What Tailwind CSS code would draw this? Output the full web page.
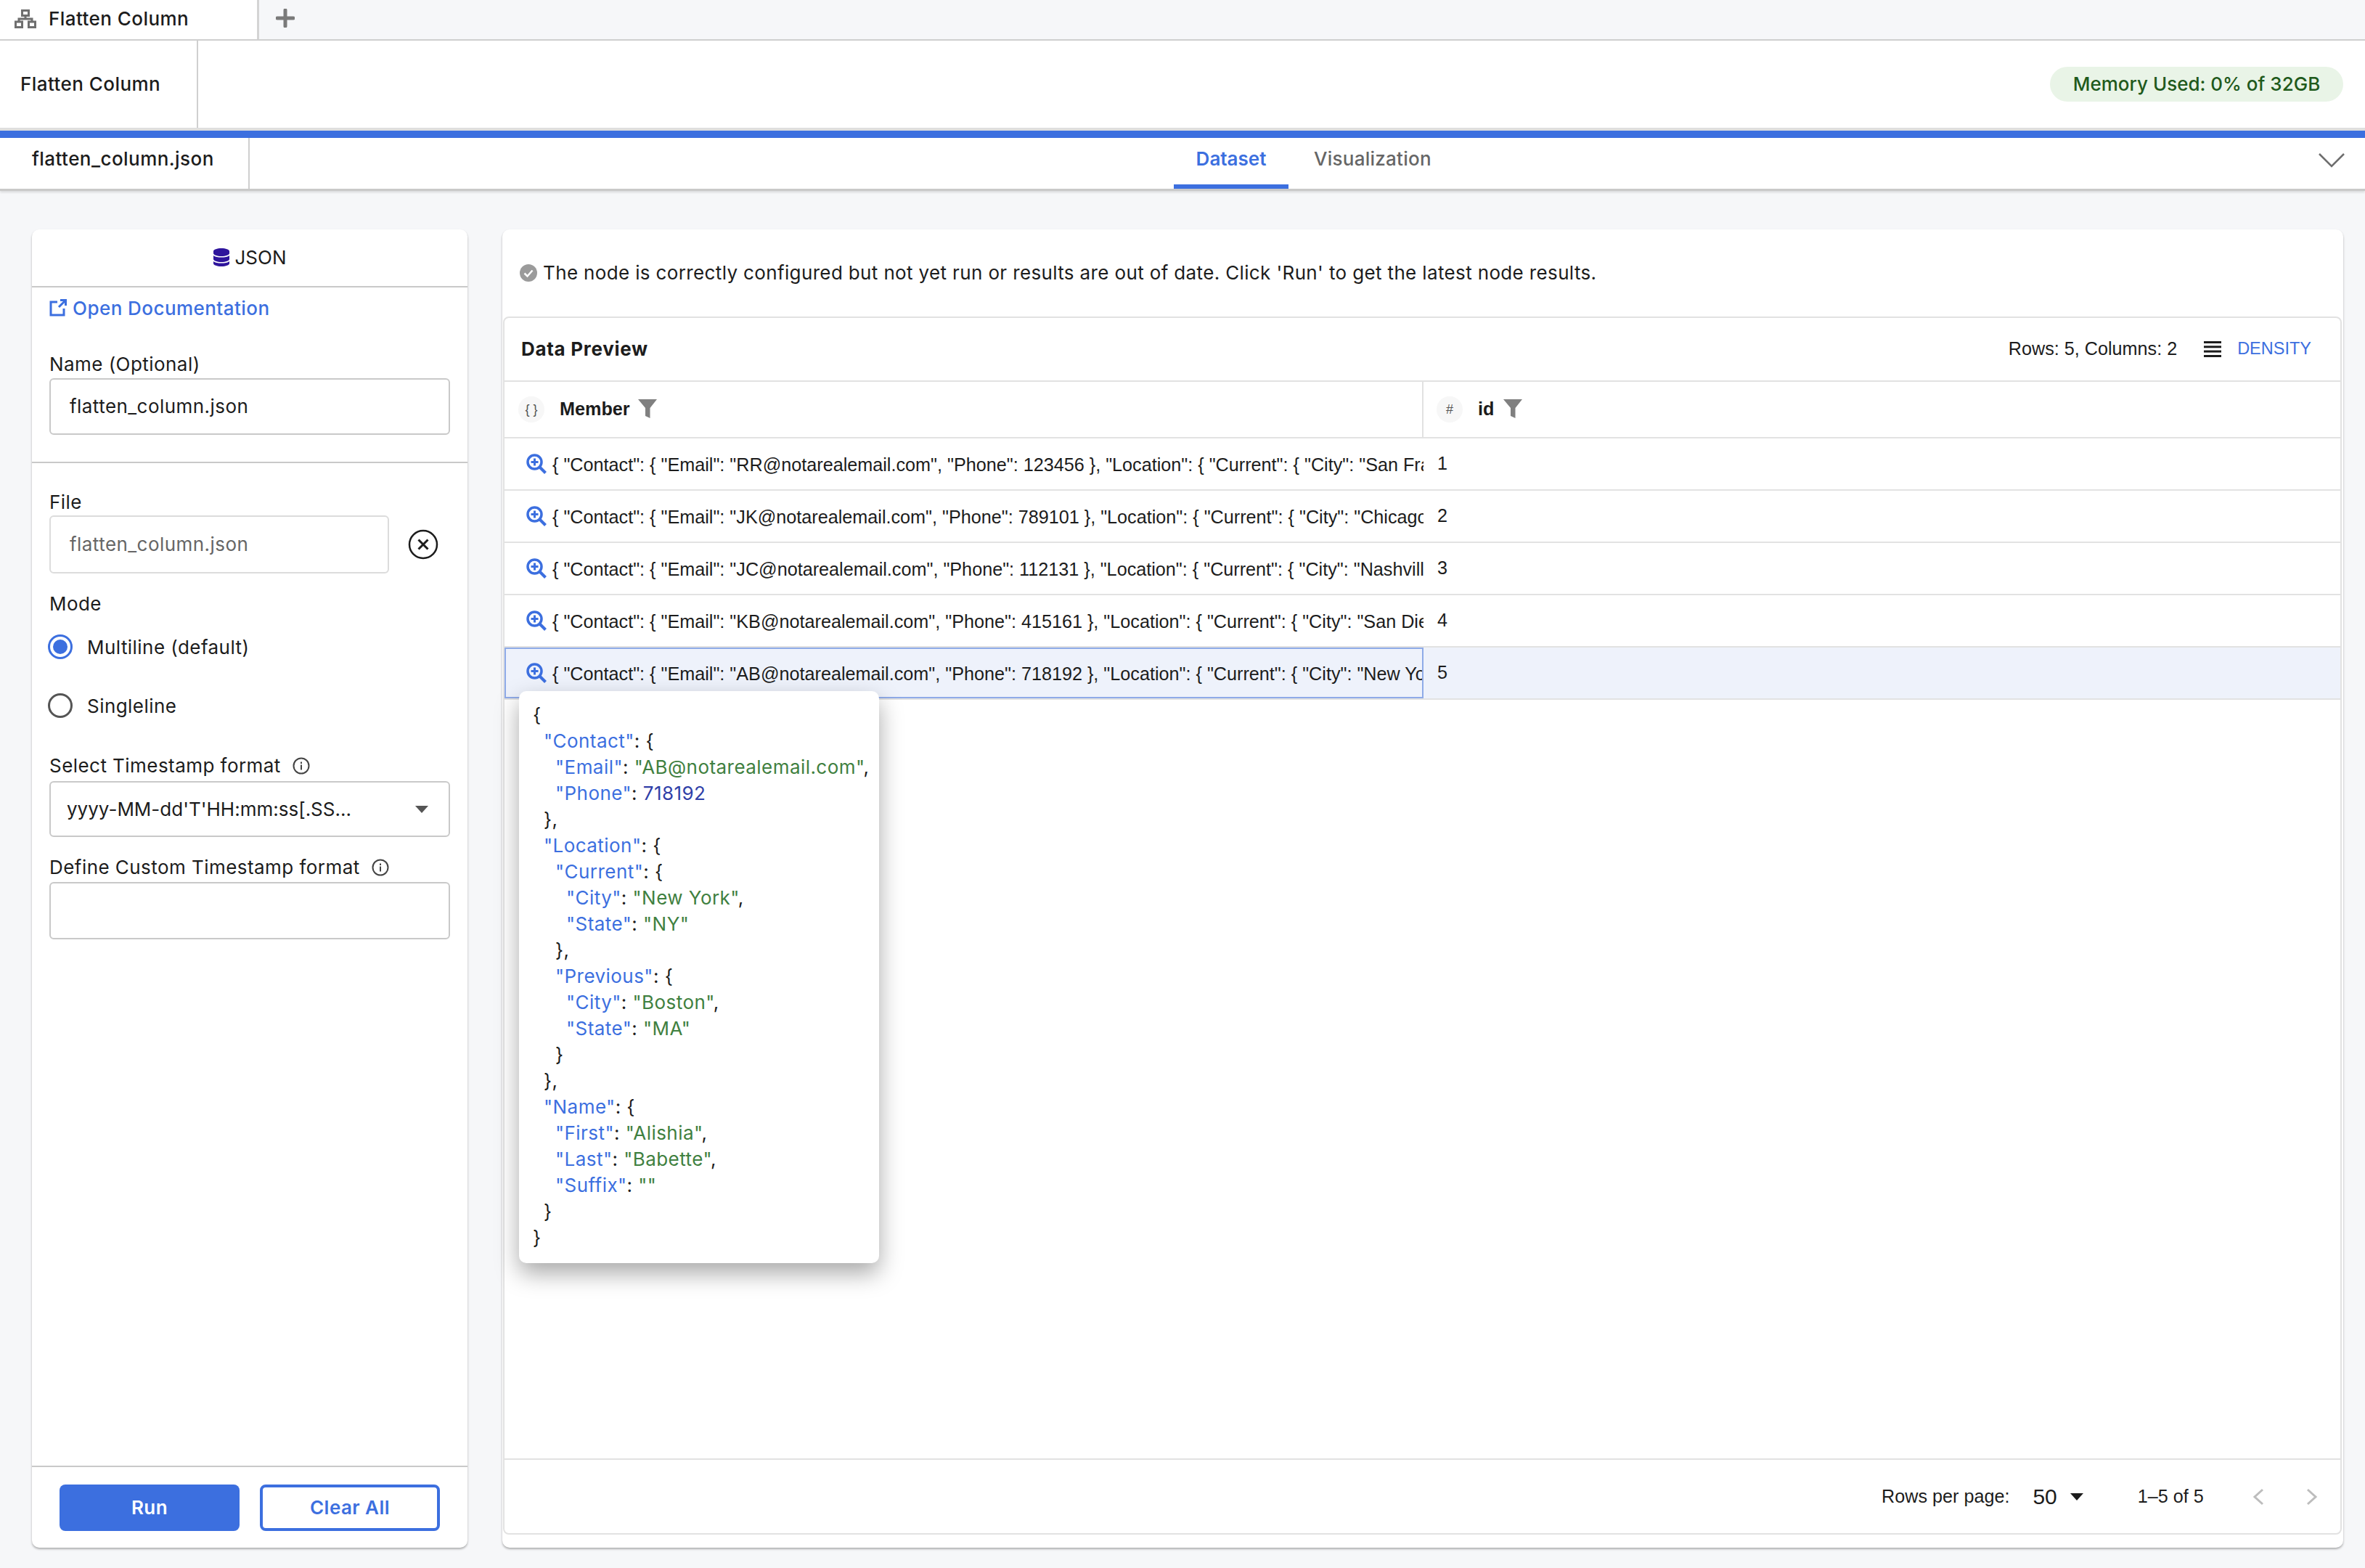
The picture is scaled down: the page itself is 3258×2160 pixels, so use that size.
<!DOCTYPE html>
<html lang="en">
<head>
    <meta charset="UTF-8">
    <title>Flatten Column</title>
    <script src="https://cdn.jsdelivr.net/npm/@tailwindcss/browser@4"></script>
</head>
<body class="bg-[#f6f7f9]">
<div class="w-[3258px] h-[2160px] overflow-hidden flex flex-col font-['Inter',sans-serif] text-[26px] tracking-[0.45px] text-[#1c1c1c]">

    <!-- Tab strip -->
    <div class="h-[56px] flex border-b-2 border-[#cfcfcf] shrink-0">
        <div class="w-[357px] bg-white border-r-[3px] border-[#d4d4d4] flex items-center pl-[20px] gap-[17px] pb-[4px]">
            <svg class="w-[30px] h-[26px] mt-[2px]" viewBox="0 0 30 26" fill="none" stroke="#6f6f6f" stroke-width="3">
                <rect x="10.5" y="1.5" width="9" height="7"/><rect x="1.5" y="17" width="9" height="7.500"/><rect x="19.500" y="17" width="9" height="7.500"/>
                <path d="M15 8.500V13M6 17v-4h18v4"/>
            </svg>
            <span class="font-medium">Flatten Column</span>
        </div>
        <div class="pl-[23px] flex items-center pb-[5px]">
            <svg class="w-[26px] h-[26px]" viewBox="0 0 26 26"><path d="M13 2v22M2 13h22" stroke="#7a7a7a" stroke-width="5" stroke-linecap="round"/></svg>
        </div>
    </div>

    <!-- Workflow header -->
    <div class="h-[124px] bg-white flex items-stretch justify-between border-b-4 border-[#dedede] shrink-0">
        <div class="w-[273px] border-r-2 border-[#cfcfcf] pl-[28px] pb-[2px] flex items-center font-medium">Flatten Column</div>
        <div class="flex items-center pr-[30px]">
            <div class="w-[404px] h-[48px] pb-[2px] rounded-full bg-[#e9f4e7] flex items-center justify-center text-[#1f5a1c] font-medium tracking-normal">Memory Used: 0% of 32GB</div>
        </div>
    </div>

    <!-- Node tabs -->
    <div class="h-[83px] bg-white border-t-10 border-b-[3px] border-t-[#3c6fdf] border-b-[#c9c9c9] shadow-[0_2px_3px_rgba(0,0,0,0.12)] flex shrink-0 relative">
        <div class="w-[344px] border-r-2 border-[#cfcfcf] pl-[44px] pb-[13px] flex items-center font-medium">flatten_column.json</div>
        <div class="ml-[1273px] w-[158px] h-[70px] border-b-[6px] border-[#3c6fdf] pb-[8px] flex items-center justify-center text-[#3c6fdf] font-semibold tracking-normal">Dataset</div>
        <div class="ml-[35px] h-[70px] pb-[13px] flex items-center text-[#666666] font-medium tracking-[0.25px]">Visualization</div>
        <svg class="absolute right-[28px] top-[20px] w-[36px] h-[22px]" viewBox="0 0 36 22" fill="none"><path d="M1 2l17 17L35 2" stroke="#6e6e6e" stroke-width="2.500"/></svg>
    </div>

    <div class="flex-1 flex pl-[44px] pr-[30px] pt-[53px] pb-[28px] gap-[48px] min-h-0">

        <!-- Config panel -->
        <div class="w-[600px] bg-white rounded-[10px] shadow-[0_2px_3px_rgba(0,0,0,0.3)] flex flex-col">
            <div class="h-[80px] border-b-2 border-[#c9c9c9] pb-[2px] flex items-center justify-center gap-[8px] shrink-0">
                <svg class="w-[22px] h-[25px]" viewBox="0 0 22 25">
                    <path fill="#2e149c" d="M11 0c6 0 11 1.700 11 4v3c0 2.300-5 4-11 4S0 9.300 0 7V4c0-2.300 5-4 11-4zM0 10c2.300 1.800 6.500 2.600 11 2.600S19.700 11.800 22 10v5c0 2.300-5 4-11 4S0 17.300 0 15zM0 18c2.300 1.800 6.500 2.600 11 2.600S19.700 19.800 22 18v3c0 2.300-5 4-11 4S0 23.300 0 21z"/>
                </svg>
                <span class="tracking-normal">JSON</span>
            </div>

            <div class="border-b-2 border-[#c9c9c9] px-[24px] pb-[37px] shrink-0">
                <div class="mt-[14px] h-[28px] flex items-center gap-[8px] text-[#3c6fdf] font-medium">
                    <svg class="w-[24px] h-[24px]" viewBox="0 0 24 24" fill="none" stroke="#3c6fdf" stroke-width="3">
                        <path d="M11 4H2v18h18v-9M13 11L22 2M15 1.500h7.500V9"/>
                    </svg>
                    Open Documentation
                </div>
                <div class="mt-[48px] leading-[32px]">Name (Optional)</div>
                <div class="mt-[3px] h-[78px] border-2 border-[#c9c9c9] rounded-[6px] pl-[26px] pb-[2px] flex items-center">flatten_column.json</div>
            </div>

            <div class="flex-1 px-[24px]">
                <div class="mt-[38px] leading-[32px]">File</div>
                <div class="mt-[2px] flex items-center">
                    <div class="w-[468px] h-[80px] border-2 border-[#dcdcdc] rounded-[6px] pl-[26px] pb-[2px] flex items-center text-[#666666]">flatten_column.json</div>
                    <svg class="ml-[26px] w-[42px] h-[42px]" viewBox="0 0 42 42" fill="none" stroke="#1c1c1c"><circle cx="21" cy="21" r="19" stroke-width="2.500"/><path d="M14.500 14.500l13 13M27.500 14.500l-13 13" stroke-width="3"/></svg>
                </div>
                <div class="mt-[26px] leading-[32px]">Mode</div>
                <div class="mt-[23px] h-[40px] -ml-[2px] flex items-center gap-[20px]">
                    <div class="w-[34px] h-[34px] rounded-full border-[3px] border-[#3c6fdf] flex items-center justify-center"><div class="w-[20px] h-[20px] rounded-full bg-[#3c6fdf]"></div></div>
                    <span>Multiline (default)</span>
                </div>
                <div class="mt-[41px] h-[40px] -ml-[2px] flex items-center gap-[20px]">
                    <div class="w-[34px] h-[34px] rounded-full border-[3px] border-[#555555]"></div>
                    <span>Singleline</span>
                </div>
                <div class="mt-[47px] leading-[32px] flex items-center gap-[16px]">Select Timestamp format
                    <svg class="w-[24px] h-[24px]" viewBox="0 0 24 24" fill="none" stroke="#444444" stroke-width="2"><circle cx="12" cy="12" r="10.500"/><path d="M12 10.500v7M12 6.500v2.500"/></svg>
                </div>
                <div class="mt-[5px] h-[77px] border-2 border-[#c9c9c9] rounded-[6px] pl-[22px] pr-[28px] flex items-center justify-between">
                    <span class="tracking-normal">yyyy-MM-dd'T'HH:mm:ss[.SS...</span>
                    <svg class="w-[18px] h-[10px]" viewBox="0 0 18 10"><path d="M0 0h18L9 10z" fill="#555555"/></svg>
                </div>
                <div class="mt-[26px] leading-[32px] flex items-center gap-[16px]">Define Custom Timestamp format
                    <svg class="w-[24px] h-[24px]" viewBox="0 0 24 24" fill="none" stroke="#444444" stroke-width="2"><circle cx="12" cy="12" r="10.500"/><path d="M12 10.500v7M12 6.500v2.500"/></svg>
                </div>
                <div class="mt-[4px] h-[79px] border-2 border-[#c9c9c9] rounded-[6px]"></div>
            </div>

            <div class="h-[113px] border-t-2 border-[#c9c9c9] pt-[24px] pl-[38px] flex gap-[28px] shrink-0">
                <div class="w-[248px] h-[64px] pb-[2px] rounded-[8px] bg-[#3c6fdf] text-white font-semibold flex items-center justify-center">Run</div>
                <div class="w-[248px] h-[64px] pb-[2px] rounded-[8px] border-[4px] border-[#3c6fdf] text-[#3c6fdf] font-semibold flex items-center justify-center">Clear All</div>
            </div>
        </div>

        <!-- Results panel -->
        <div class="flex-1 bg-white rounded-[10px] shadow-[0_2px_3px_rgba(0,0,0,0.3)] flex flex-col">
            <div class="h-[120px] pl-[24px] pb-[1px] flex items-center gap-[8px] shrink-0">
                <svg class="w-[24px] h-[24px]" viewBox="0 0 24 24"><circle cx="12" cy="12" r="12" fill="#9b9b9b"/><path d="M6.500 12.500l4 4 7-8" fill="none" stroke="#ffffff" stroke-width="2.500"/></svg>
                <span class="tracking-[0.36px]">The node is correctly configured but not yet run or results are out of date. Click 'Run' to get the latest node results.</span>
            </div>

            <div class="flex-1 ml-[1px] mr-[2px] mb-[18px] border-2 border-[#e2e2e2] rounded-[8px] flex flex-col min-h-0 relative">
                <div class="h-[88px] border-b-2 border-[#e2e2e2] pl-[23px] pr-[40px] flex items-center justify-between shrink-0">
                    <span class="font-bold tracking-[0.7px] -mt-[2px]">Data Preview</span>
                    <div class="flex items-center font-['Liberation_Sans',sans-serif] text-[25.2px] tracking-normal">
                        <span>Rows: 5, Columns: 2</span>
                        <svg class="ml-[37px] w-[24px] h-[22px]" viewBox="0 0 24 22" fill="#1c1c1c"><rect y="0" width="24" height="3"/><rect y="6.300" width="24" height="3"/><rect y="12.600" width="24" height="3"/><rect y="19" width="24" height="3"/></svg>
                        <span class="ml-[22px] text-[#3c6fdf] text-[23.5px]">DENSITY</span>
                    </div>
                </div>

                <!-- Column heads -->
                <div class="h-[78px] border-b-2 border-[#e2e2e2] flex font-['Liberation_Sans',sans-serif] font-bold text-[25.2px] tracking-normal shrink-0">
                    <div class="w-[1266px] border-r-2 border-[#e2e2e2] flex items-center pl-[19px]">
                        <div class="w-[36px] h-[36px] rounded-full bg-[#f7f7f7] flex items-center justify-center font-normal text-[18px] text-[#555555]">{ }</div>
                        <span class="ml-[21px]">Member</span>
                        <svg class="ml-[11px] w-[26px] h-[26px] -mt-[3px]" viewBox="0 0 26 26"><path d="M0 0h26L16.500 12v14L10 23V12z" fill="#808080"/></svg>
                    </div>
                    <div class="flex items-center pl-[18px]">
                        <div class="w-[36px] h-[36px] rounded-full bg-[#f7f7f7] flex items-center justify-center font-normal text-[18px] text-[#555555]">#</div>
                        <span class="ml-[21px]">id</span>
                        <svg class="ml-[13px] w-[26px] h-[26px] -mt-[3px]" viewBox="0 0 26 26"><path d="M0 0h26L16.500 12v14L10 23V12z" fill="#808080"/></svg>
                    </div>
                </div>

                <!-- Rows -->
                <div class="flex-1 font-['Liberation_Sans',sans-serif] text-[25.2px] tracking-normal min-h-0">
                    <div class="h-[72px] border-b-2 border-[#e2e2e2] flex items-center">
                        <div class="w-[1266px] h-full flex items-center pl-[30px] gap-[8px] overflow-hidden whitespace-nowrap">
                            <svg class="w-[28px] h-[28px] shrink-0" viewBox="0 0 28 28" fill="none" stroke="#3c6fdf"><circle cx="11.500" cy="11.500" r="9.500" stroke-width="3.500"/><path d="M11.500 6.500v10M6.500 11.500h10" stroke-width="3"/><path d="M18.500 18.500l8 8" stroke-width="4"/></svg>
                            <span class="mt-[3px]">{ "Contact": { "Email": "RR@notarealemail.com", "Phone": 123456 }, "Location": { "Current": { "City": "San Francisco", "State": "CA" } } }</span>
                        </div>
                        <div class="pl-[19px]">1</div>
                    </div>
                    <div class="h-[72px] border-b-2 border-[#e2e2e2] flex items-center">
                        <div class="w-[1266px] h-full flex items-center pl-[30px] gap-[8px] overflow-hidden whitespace-nowrap">
                            <svg class="w-[28px] h-[28px] shrink-0" viewBox="0 0 28 28" fill="none" stroke="#3c6fdf"><circle cx="11.500" cy="11.500" r="9.500" stroke-width="3.500"/><path d="M11.500 6.500v10M6.500 11.500h10" stroke-width="3"/><path d="M18.500 18.500l8 8" stroke-width="4"/></svg>
                            <span class="mt-[3px]">{ "Contact": { "Email": "JK@notarealemail.com", "Phone": 789101 }, "Location": { "Current": { "City": "Chicago", "State": "IL" } } }</span>
                        </div>
                        <div class="pl-[19px]">2</div>
                    </div>
                    <div class="h-[72px] border-b-2 border-[#e2e2e2] flex items-center">
                        <div class="w-[1266px] h-full flex items-center pl-[30px] gap-[8px] overflow-hidden whitespace-nowrap">
                            <svg class="w-[28px] h-[28px] shrink-0" viewBox="0 0 28 28" fill="none" stroke="#3c6fdf"><circle cx="11.500" cy="11.500" r="9.500" stroke-width="3.500"/><path d="M11.500 6.500v10M6.500 11.500h10" stroke-width="3"/><path d="M18.500 18.500l8 8" stroke-width="4"/></svg>
                            <span class="mt-[3px]">{ "Contact": { "Email": "JC@notarealemail.com", "Phone": 112131 }, "Location": { "Current": { "City": "Nashville", "State": "TN" } } }</span>
                        </div>
                        <div class="pl-[19px]">3</div>
                    </div>
                    <div class="h-[72px] border-b-2 border-[#e2e2e2] flex items-center">
                        <div class="w-[1266px] h-full flex items-center pl-[30px] gap-[8px] overflow-hidden whitespace-nowrap">
                            <svg class="w-[28px] h-[28px] shrink-0" viewBox="0 0 28 28" fill="none" stroke="#3c6fdf"><circle cx="11.500" cy="11.500" r="9.500" stroke-width="3.500"/><path d="M11.500 6.500v10M6.500 11.500h10" stroke-width="3"/><path d="M18.500 18.500l8 8" stroke-width="4"/></svg>
                            <span class="mt-[3px]">{ "Contact": { "Email": "KB@notarealemail.com", "Phone": 415161 }, "Location": { "Current": { "City": "San Diego", "State": "CA" } } }</span>
                        </div>
                        <div class="pl-[19px]">4</div>
                    </div>
                    <div class="h-[72px] border-b-2 border-[#e2e2e2] flex items-center bg-[#eef2fb]">
                        <div class="w-[1266px] h-full border-2 border-[#8fabe8] flex items-center pl-[28px] gap-[8px] overflow-hidden whitespace-nowrap">
                            <svg class="w-[28px] h-[28px] shrink-0" viewBox="0 0 28 28" fill="none" stroke="#3c6fdf"><circle cx="11.500" cy="11.500" r="9.500" stroke-width="3.500"/><path d="M11.500 6.500v10M6.500 11.500h10" stroke-width="3"/><path d="M18.500 18.500l8 8" stroke-width="4"/></svg>
                            <span class="mt-[3px]">{ "Contact": { "Email": "AB@notarealemail.com", "Phone": 718192 }, "Location": { "Current": { "City": "New York", "State": "NY" } } }</span>
                        </div>
                        <div class="pl-[19px]">5</div>
                    </div>
                </div>

                <!-- Pagination -->
                <div class="h-[103px] border-t-2 border-[#e2e2e2] flex items-center font-['Liberation_Sans',sans-serif] text-[25.2px] tracking-normal shrink-0 pl-[1897px]">
                    <span>Rows per page:</span>
                    <span class="ml-[32px] text-[30px]">50</span>
                    <svg class="ml-[18px] w-[18px] h-[10px]" viewBox="0 0 18 10"><path d="M0 0h18L9 10z" fill="#1c1c1c"/></svg>
                    <span class="ml-[75px]">1–5 of 5</span>
                    <svg class="ml-[67px] w-[16px] h-[24px]" viewBox="0 0 16 24" fill="none" stroke="#bdbdbd" stroke-width="3"><path d="M14 2L3 12l11 10"/></svg>
                    <svg class="ml-[58px] w-[16px] h-[24px]" viewBox="0 0 16 24" fill="none" stroke="#bdbdbd" stroke-width="3"><path d="M2 2l11 10L2 22"/></svg>
                </div>

                <!-- JSON popover -->
                <div class="absolute left-[20px] top-[514px] w-[496px] h-[788px] bg-white rounded-[10px] shadow-[0_14px_32px_rgba(0,0,0,0.34)] pt-[15px] pl-[19px] leading-[36px] whitespace-nowrap">
                    <div>{</div>
                    <div class="pl-[15px]"><span class="text-[#3c6fdf]">"Contact"</span>: {</div>
                    <div class="pl-[31px]"><span class="text-[#3c6fdf]">"Email"</span>: <span class="text-[#3f8040]">"AB@notarealemail.com"</span>,</div>
                    <div class="pl-[31px]"><span class="text-[#3c6fdf]">"Phone"</span>: <span class="text-[#2f3fa8]">718192</span></div>
                    <div class="pl-[15px]">},</div>
                    <div class="pl-[15px]"><span class="text-[#3c6fdf]">"Location"</span>: {</div>
                    <div class="pl-[31px]"><span class="text-[#3c6fdf]">"Current"</span>: {</div>
                    <div class="pl-[46px]"><span class="text-[#3c6fdf]">"City"</span>: <span class="text-[#3f8040]">"New York"</span>,</div>
                    <div class="pl-[46px]"><span class="text-[#3c6fdf]">"State"</span>: <span class="text-[#3f8040]">"NY"</span></div>
                    <div class="pl-[31px]">},</div>
                    <div class="pl-[31px]"><span class="text-[#3c6fdf]">"Previous"</span>: {</div>
                    <div class="pl-[46px]"><span class="text-[#3c6fdf]">"City"</span>: <span class="text-[#3f8040]">"Boston"</span>,</div>
                    <div class="pl-[46px]"><span class="text-[#3c6fdf]">"State"</span>: <span class="text-[#3f8040]">"MA"</span></div>
                    <div class="pl-[31px]">}</div>
                    <div class="pl-[15px]">},</div>
                    <div class="pl-[15px]"><span class="text-[#3c6fdf]">"Name"</span>: {</div>
                    <div class="pl-[31px]"><span class="text-[#3c6fdf]">"First"</span>: <span class="text-[#3f8040]">"Alishia"</span>,</div>
                    <div class="pl-[31px]"><span class="text-[#3c6fdf]">"Last"</span>: <span class="text-[#3f8040]">"Babette"</span>,</div>
                    <div class="pl-[31px]"><span class="text-[#3c6fdf]">"Suffix"</span>: <span class="text-[#3f8040]">""</span></div>
                    <div class="pl-[15px]">}</div>
                    <div>}</div>
                </div>
            </div>
        </div>
    </div>
</div>
</body>
</html>
